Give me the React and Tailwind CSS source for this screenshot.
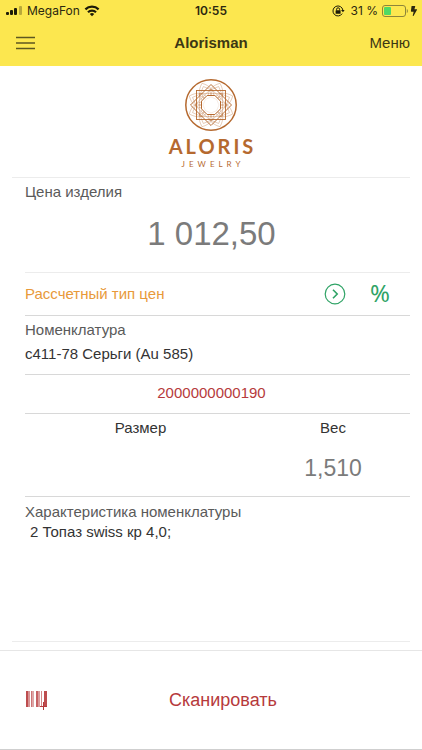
import { FaBolt } from 'react-icons/fa';

const barcodeBars = [
  { x: 0, w: 2, o: 0.9 }, { x: 2, w: 2, o: 0.55 }, { x: 5, w: 1, o: 0.7 }, { x: 6, w: 2, o: 0.45 },
  { x: 10, w: 2, o: 0.8 }, { x: 12, w: 2, o: 0.5 }, { x: 15, w: 1, o: 0.6 }, { x: 18, w: 3, o: 0.9 }
];

function StatusBar() {
  return (
    <div className="relative flex items-center justify-between h-[22px] pl-1.5 pr-1 text-[12px] leading-4 text-[#2b2810] font-['Inter',sans-serif]">
      <div className="flex items-center gap-1">
        <svg width="17" height="10" viewBox="0 0 17 10" fill="#1d1b08" aria-hidden="true">
          <rect x="0" y="6" width="3" height="3" rx="1" />
          <rect x="4" y="4" width="3" height="5" rx="1" />
          <rect x="8" y="2" width="3" height="7" rx="1" />
          <rect x="13" y="0" width="3" height="9" rx="1" opacity="0.3" />
        </svg>
        <span>MegaFon</span>
        <svg width="16" height="12" viewBox="0 0 16 12" fill="none" stroke="#1d1b08" strokeWidth="2.2" aria-hidden="true">
          <path d="M1.4 4.4a9.4 9.4 0 0 1 13.2 0" />
          <path d="M4 7.3a5.7 5.7 0 0 1 8 0" />
          <path d="M5.8 9a3.1 3.1 0 0 1 4.4 0L8 11.3z" fill="#1d1b08" stroke="none" />
        </svg>
      </div>
      <span className="absolute inset-x-0 text-center font-semibold">10:55</span>
      <div className="flex items-center gap-1">
        <svg className="mr-0.5" width="13" height="12" viewBox="0 0 13 12" fill="none" stroke="#1d1b08" aria-hidden="true">
          <path d="M10.2 8.6a5 5 0 1 1 .7-3.4" />
          <path d="M9 5l2 2.2L12.6 5z" fill="#1d1b08" stroke="none" />
          <rect x="3.6" y="5.2" width="5" height="3.6" rx="0.5" fill="#1d1b08" stroke="none" />
          <path d="M4.6 5.4V4.3a1.5 1.5 0 0 1 3 0v1.1" />
        </svg>
        <span>31 %</span>
        <div className="flex items-center gap-0.5">
          <svg width="26" height="12" viewBox="0 0 26 12" aria-hidden="true">
            <rect x="0.5" y="0.5" width="23" height="11" rx="2.5" fill="none" stroke="#8d853a" />
            <rect x="2" y="2" width="7" height="8" rx="1" fill="#4fd964" />
            <path d="M24.8 4v4c1.4-.7 1.4-3.3 0-4z" fill="#8d853a" />
          </svg>
          <FaBolt className="w-2 h-2.5" aria-hidden="true" />
        </div>
      </div>
    </div>
  );
}

function NavBar() {
  return (
    <div className="relative flex items-center justify-between h-11 pb-0.5 px-3 text-[#3c3814]">
      <button type="button" aria-label="Навигация" className="p-1">
        <svg width="19" height="14" viewBox="0 0 19 14" stroke="#5d5720" strokeWidth="1.3" aria-hidden="true">
          <path d="M0 1.5h19M0 7h19M0 12.5h19" />
        </svg>
      </button>
      <h1 className="absolute inset-x-20 text-center text-[15px] font-bold">Alorisman</h1>
      <button type="button" className="text-[15px]">Меню</button>
    </div>
  );
}

function Logo() {
  const petals = [22.5, 67.5, 112.5, 157.5, 202.5, 247.5, 292.5, 337.5];
  const octagon = 'M23.1 17.5h7.8l5.6 5.6v7.8l-5.6 5.6h-7.8l-5.6-5.6v-7.8z';

  return (
    <div className="flex flex-col items-center pt-3 h-[111px] text-[#b5692f]">
      <svg width="54" height="54" viewBox="0 0 54 54" fill="none" stroke="currentColor" aria-hidden="true">
        <circle cx="27" cy="27" r="25.2" strokeWidth="1.5" />
        <g strokeWidth="0.5" opacity="0.6">
          {petals.map((angle) => (
            <g key={angle} transform={`rotate(${angle} 27 27)`}>
              <path d="M27 3.5C20 9 19 15 21 20M27 3.5C34 9 35 15 33 20" />
              <path d="M27 7l7 7-7 7-7-7z" />
            </g>
          ))}
        </g>
        <g strokeWidth="0.9">
          <rect x="12.5" y="12.5" width="29" height="29" />
          <rect x="12.5" y="12.5" width="29" height="29" transform="rotate(45 27 27)" />
        </g>
        <g strokeWidth="0.5" opacity="0.7">
          <rect x="15.5" y="15.5" width="23" height="23" />
          <rect x="15.5" y="15.5" width="23" height="23" transform="rotate(45 27 27)" />
        </g>
        <path d={octagon} fill="#fff" strokeWidth="1" />
        <g strokeWidth="0.3" opacity="0.4">
          <path d="M27 19l5.6 2.4L35 27l-2.4 5.6L27 35l-5.6-2.4L19 27l2.4-5.6z" />
        </g>
      </svg>
      <div className="pl-[3px] pt-1 text-[20px] leading-5 font-bold tracking-[3px] font-['Lato',sans-serif]">ALORIS</div>
      <div className="pt-0.5 pl-1 text-[8px] leading-3 tracking-[4px] font-['Lato',sans-serif]">JEWELRY</div>
    </div>
  );
}

export default function App() {
  return (
    <div className="flex flex-col min-h-screen bg-white text-[#333] text-[15px] leading-5 font-['Liberation_Sans',Arial,sans-serif]">
      <header className="bg-[#fce74f]">
        <StatusBar />
        <NavBar />
      </header>

      <main className="flex flex-col flex-1 mx-3">
        <Logo />

        <section className="pl-[13px] border-t border-[#ececec]">
          <h2 className="pt-1 text-[#5a5a5a]">Цена изделия</h2>
          <div className="pt-3 pr-3 h-[70px] text-center text-[33px] leading-10 text-[#7b7b7b]">1 012,50</div>
        </section>

        <div className="flex flex-col flex-1 ml-[13px]">
          <section className="flex items-center justify-between h-[43px] border-t border-[#ececec] text-[#e8993a]">
            <span>Рассчетный тип цен</span>
            <div className="flex items-center gap-6 pr-5 text-[#2fa366]">
              <button type="button" aria-label="Выбрать тип цен">
                <svg width="22" height="22" viewBox="0 0 22 22" fill="none" stroke="currentColor" aria-hidden="true">
                  <circle cx="11" cy="11" r="9.8" strokeWidth="1.2" />
                  <path d="M9 6.8l4.2 4.2L9 15.2" strokeWidth="1.6" />
                </svg>
              </button>
              <button type="button" className="pb-0.5 text-[24px] leading-6 font-['Noto_Sans',sans-serif]">%</button>
            </div>
          </section>

          <section className="h-[59px] border-t border-[#d8d8d8]">
            <h2 className="pt-1 text-[#5a5a5a]">Номенклатура</h2>
            <p className="pt-1">с411-78 Серьги (Au 585)</p>
          </section>

          <section className="h-[39px] pt-2 pr-3 border-t border-[#d8d8d8] text-center text-[#b63a3c]">
            2000000000190
          </section>

          <section className="grid grid-cols-[3fr_2fr] h-[83px] pt-1 border-t border-[#d8d8d8] text-center">
            <h2>Размер</h2>
            <div>
              <h2>Вес</h2>
              <p className="pt-3.5 text-[23px] leading-8 text-[#7b7b7b]">1,510</p>
            </div>
          </section>

          <section className="pt-[5px] border-t border-[#d8d8d8]">
            <h2 className="text-[#5a5a5a]">Характеристика номенклатуры</h2>
            <p className="pl-[5px]">2 Топаз swiss кр 4,0;</p>
          </section>
        </div>

        <div className="mb-2 border-t border-[#ececec]" />
      </main>

      <footer className="h-[100px] border-t border-b border-t-[#e6e6e6] border-b-[#cfcfcf]">
        <button type="button" className="relative flex items-center justify-center w-full h-full pl-6 text-[18px] text-[#b63a3c]">
          <svg className="absolute left-6.5" width="22" height="20" viewBox="0 0 22 20" fill="currentColor" aria-hidden="true">
            {barcodeBars.map((bar) => (
              <rect key={bar.x} x={bar.x} y="1" width={bar.w} height="16" opacity={bar.o} />
            ))}
            <path d="M17 12h1v4h3v1h-3v3h-1v-3h-3v-1h3z" />
          </svg>
          Сканировать
        </button>
      </footer>
    </div>
  );
}
